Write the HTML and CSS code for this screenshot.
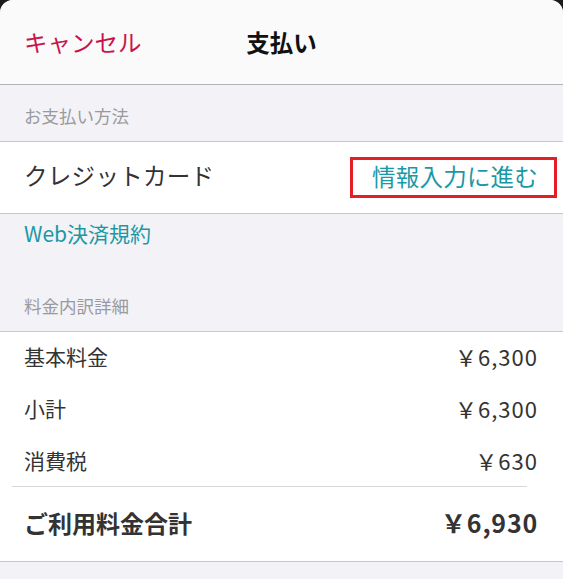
FILE: index.html
```html
<!DOCTYPE html>
<html lang="ja">
<head>
<meta charset="utf-8">
<link rel="stylesheet" href="styles.css">
</head>
<body>
<div class="sheet">
  <header class="nav">
    <span class="cancel">キャンセル</span>
    <span class="title">支払い</span>
  </header>
  <div class="section-head">お支払い方法</div>
  <div class="group">
    <div class="method-row">
      <span class="method">クレジットカード</span>
      <span class="proceed">情報入力に進む</span>
    </div>
  </div>
  <div class="gap-area">
    <span class="terms">Web決済規約</span>
    <span class="section-label">料金内訳詳細</span>
  </div>
  <div class="group">
    <div class="line"><span>基本料金</span><span class="amt">￥6,300</span></div>
    <div class="line"><span>小計</span><span class="amt">￥6,300</span></div>
    <div class="line"><span>消費税</span><span class="amt">￥630</span></div>
    <div class="divider"></div>
    <div class="total"><span>ご利用料金合計</span><span class="amt">￥6,930</span></div>
  </div>
  <div class="foot"></div>
</div>
</body>
</html>
```

FILE: styles.css
```css
* { box-sizing: border-box; }
html, body { margin: 0; padding: 0; }
body {
  background: #1c1c1e;
  font-family: "Noto Sans CJK JP", "Noto Sans", sans-serif;
  width: 563px;
  height: 579px;
  overflow: hidden;
}
.sheet {
  background: #f2f2f7;
  border-radius: 13px 13px 0 0;
  overflow: hidden;
  height: 579px;
}
.nav {
  height: 85px;
  background: #fafafa;
  border-bottom: 1px solid #b4b4b8;
  display: flex;
  align-items: center;
  justify-content: center;
  position: relative;
}
.cancel {
  position: absolute;
  left: 24px;
  top: 27px;
  font-size: 23.5px;
  line-height: 30px;
  color: #c9144a;
}
.title {
  font-size: 23.5px;
  font-weight: bold;
  color: #111;
  line-height: 30px;
}
.section-head {
  height: 56px;
  display: flex;
  align-items: flex-end;
  padding: 0 0 15px 24px;
  font-size: 17.5px;
  line-height: 20px;
  color: #9a9a9e;
}
.group {
  background: #fff;
  border-top: 1px solid #c8c7cc;
  border-bottom: 1px solid #c8c7cc;
}
.method-row {
  height: 71px;
  display: flex;
  align-items: center;
  justify-content: space-between;
  padding: 0 6px 0 24px;
}
.method {
  font-size: 23.5px;
  line-height: 30px;
  padding-bottom: 5px;
  color: #333;
  letter-spacing: 0.3px;
}
.proceed {
  font-size: 23.5px;
  line-height: 32px;
  padding: 0 16px 3px 19px;
  color: #1a99a5;
  border: 3px solid #e51e25;
  letter-spacing: 0.2px;
}
.gap-area {
  height: 117px;
  display: flex;
  flex-direction: column;
  justify-content: space-between;
  padding: 5px 0 15px 24px;
}
.terms {
  font-size: 21px;
  line-height: 28px;
  color: #1a99a5;
}
.section-label {
  font-size: 17.5px;
  line-height: 20px;
  color: #9a9a9e;
}
.line {
  height: 52px;
  display: flex;
  align-items: center;
  justify-content: space-between;
  padding: 0 25px 4px 24px;
  font-size: 21px;
  color: #333;
}
.amt { letter-spacing: 1px; font-size: 22px; }
.divider {
  height: 1px;
  margin: -2px 36px 0 12px;
  background: #d8d8d8;
}
.total {
  height: 74px;
  display: flex;
  align-items: center;
  justify-content: space-between;
  padding: 0 25px 4px 24px;
  font-size: 24px;
  font-weight: bold;
  color: #333;
}
.total .amt { font-size: 25px; letter-spacing: 0.8px; }
.foot { height: 20px; }
```
